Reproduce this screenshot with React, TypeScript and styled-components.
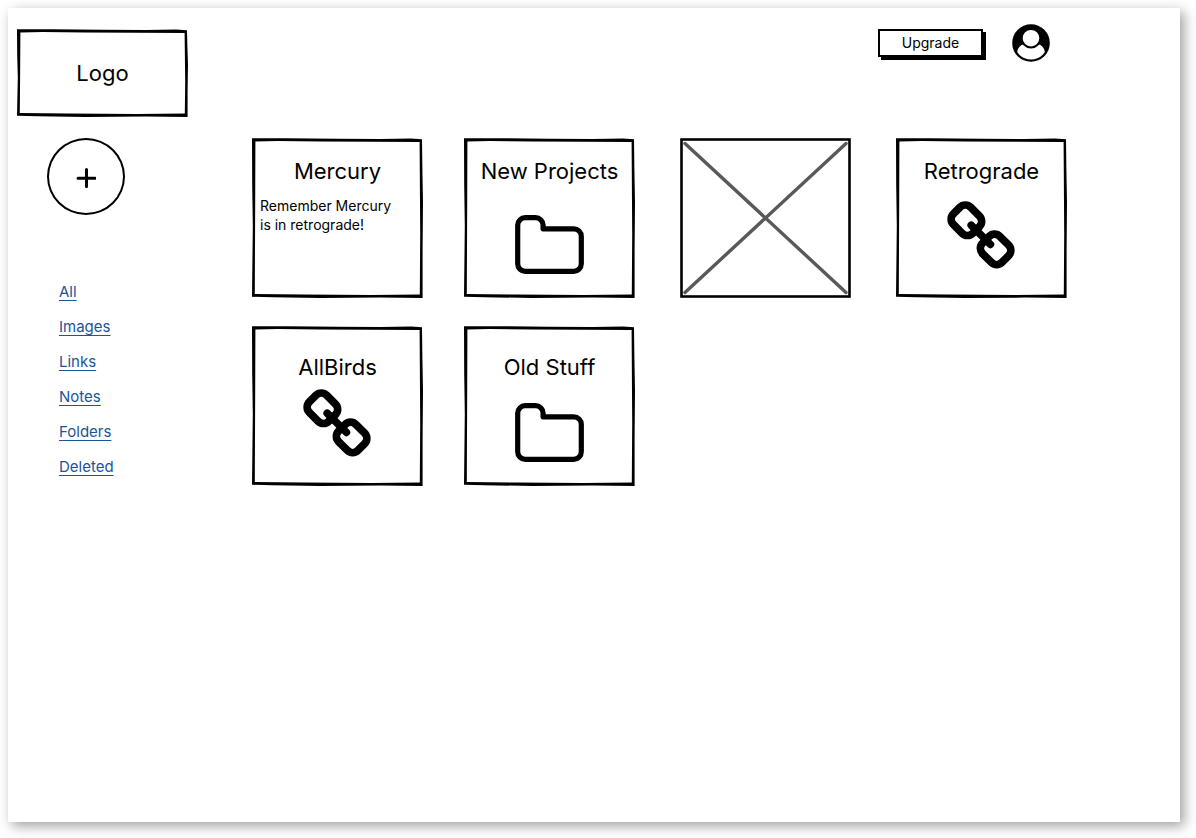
import React from "react";
import styled, { createGlobalStyle } from "styled-components";

const ink = "#000";

const GlobalStyle = createGlobalStyle`
  * { box-sizing: border-box; }
  body {
    margin: 0;
    background: #fff;
    color: ${ink};
    font-family: Inter, "Liberation Sans", sans-serif;
  }
`;

const Sheet = styled.div`
  margin: 8px 16px 16px 8px;
  min-height: calc(100vh - 24px);
  background: #fff;
  box-shadow: 4px 4px 12px rgba(0, 0, 0, 0.38);
`;

const Header = styled.header`
  display: flex;
  justify-content: space-between;
  align-items: flex-start;
  padding: 21px 130px 21px 9px;
`;

const LogoLink = styled.a`
  position: relative;
  display: flex;
  align-items: center;
  justify-content: center;
  width: 171px;
  height: 88px;
  color: ${ink};
  font-size: 22px;
  line-height: 28px;
  text-decoration: none;
`;

const Actions = styled.div`
  display: flex;
  align-items: center;
  gap: 29px;
  height: 28px;
`;

const UpgradeButton = styled.button`
  width: 105px;
  height: 28px;
  padding: 0;
  border: 2px solid ${ink};
  background: #fff;
  box-shadow: 3px 3px 0 ${ink};
  color: ${ink};
  font: 14px/20px Inter, "Liberation Sans", sans-serif;
`;

const AvatarButton = styled.button`
  display: block;
  width: 38px;
  height: 38px;
  padding: 0;
  border: 0;
  border-radius: 50%;
  background: none;

  svg { display: block; }
`;

const Body = styled.div`
  display: flex;
  align-items: flex-start;
`;

const Sidebar = styled.aside`
  flex: 0 0 244px;
  padding-left: 39px;
`;

const AddButton = styled.button`
  display: flex;
  align-items: center;
  justify-content: center;
  width: 78px;
  height: 77px;
  padding: 2px 0 0;
  border: 2px solid ${ink};
  border-radius: 50%;
  background: #fff;
  color: ${ink};
`;

const NavList = styled.ul`
  margin: 67px 0 0;
  padding: 0 0 0 12px;
  list-style: none;
`;

const NavItem = styled.li`
  height: 35px;
  font-size: 15px;
  line-height: 20px;
`;

const NavLink = styled.a`
  color: #1a5599;
  text-decoration: underline 1px;
  text-underline-offset: 3px;
  text-decoration-skip-ink: none;
`;

const Board = styled.main`
  flex: 1;
  display: grid;
  grid-template-columns: 212px 216px 216px 171px;
  row-gap: 28px;

  @media (max-width: 1080px) {
    grid-template-columns: repeat(auto-fill, 212px);
  }
`;

const CardBox = styled.article<{ $low?: boolean }>`
  position: relative;
  display: flex;
  flex-direction: column;
  align-items: center;
  width: 171px;
  height: 160px;
  padding: ${(p) => (p.$low ? 27 : 19)}px 8px 24px;
`;

const CardTitle = styled.h2`
  margin: 0;
  font-size: 22px;
  font-weight: 400;
  line-height: 28px;
  white-space: nowrap;
`;

const CardNote = styled.p`
  align-self: stretch;
  margin: 11px 0 0;
  padding-right: 12px;
  font-size: 14px;
  line-height: 19px;
`;

const CardIcon = styled.div`
  margin-top: auto;

  svg { display: block; }
`;

const Outline = styled.svg`
  position: absolute;
  inset: 0;
  width: 100%;
  height: 100%;
  pointer-events: none;
`;

/* Pen-drawn rectangle: slightly bowed edges of uneven thickness. */
function SketchOutline({ width: w, height: h }: { width: number; height: number }) {
  const outer = `M0 0.2 L${w * 0.2} 0.2 L${w * 0.5} 0.8 L${w * 0.75} 1 L${w * 0.93} 0.6 L${w - 1} 1.2 L${w - 0.6} ${h * 0.2} L${w} ${h * 0.4} L${w - 0.4} ${h * 0.7} L${w - 0.4} ${h} L${w * 0.75} ${h - 0.4} L${w * 0.4} ${h} L${w * 0.12} ${h - 0.8} L0 ${h - 1.2} L0.8 ${h * 0.55} L0.2 ${h * 0.3}Z`;
  const inner = `M3.4 3.6 L3.2 ${h * 0.4} L2.8 ${h - 4} L${w * 0.3} ${h - 3.4} L${w * 0.7} ${h - 3} L${w - 3.2} ${h - 3.4} L${w - 2.8} ${h * 0.6} L${w - 3.4} 4 L${w * 0.7} 3.8 L${w * 0.4} 3.5 L${w * 0.15} 3Z`;
  return (
    <Outline viewBox={`0 0 ${w} ${h}`} preserveAspectRatio="none" aria-hidden="true">
      <path d={`${outer} ${inner}`} fill={ink} fillRule="evenodd" />
    </Outline>
  );
}

function FolderIcon() {
  return (
    <svg width="69" height="59" viewBox="0 0 69 59" aria-hidden="true">
      <path
        d="M2.7 10a7.5 7.5 0 0 1 7.5-7.3H20.6a7.5 7.5 0 0 1 7.5 7.3v3.8H58.8a7.5 7.5 0 0 1 7.5 7.5V48.8a7.5 7.5 0 0 1-7.5 7.5H10.2A7.5 7.5 0 0 1 2.7 48.8Z"
        fill="none"
        stroke={ink}
        strokeWidth="5.2"
        strokeLinejoin="round"
      />
    </svg>
  );
}

function ChainIcon() {
  return (
    <svg width="69" height="73" viewBox="0 0 69 73" fill="none" stroke={ink} aria-hidden="true">
      <g strokeWidth="7.8">
        <rect x="-13.7" y="-12.2" width="27.4" height="24.4" rx="7.6" transform="translate(19.4 19.2) rotate(45)" />
        <rect x="-13.7" y="-12.2" width="27.4" height="24.4" rx="7.6" transform="translate(48.6 48.4) rotate(45)" />
      </g>
      <path d="M24.2 24.2 43.4 43.4" strokeWidth="7.6" strokeLinecap="round" />
    </svg>
  );
}

function PlusIcon() {
  return (
    <svg width="20" height="20" viewBox="0 0 20 20" aria-hidden="true">
      <path d="M10.5 1.6v17M2 10.2h17" stroke={ink} strokeWidth="3" strokeLinecap="round" />
    </svg>
  );
}

function UserIcon() {
  return (
    <svg width="38" height="38" viewBox="0 0 38 38" aria-hidden="true">
      <defs>
        <clipPath id="user-ring">
          <circle cx="19" cy="19" r="16.6" />
        </clipPath>
      </defs>
      <circle cx="19" cy="19" r="18.8" fill={ink} />
      <path
        clipPath="url(#user-ring)"
        d="M5 38V29C5.6 24 8 20.6 12.4 20.2H25.6C30 20.6 32.4 24 33 29V38Z"
        fill="#fff"
      />
      <circle cx="19" cy="14.2" r="9.3" fill="#fff" stroke={ink} strokeWidth="2" />
    </svg>
  );
}

function ImagePlaceholder() {
  return (
    <Outline viewBox="0 0 171 160" preserveAspectRatio="none" role="img" aria-label="Image">
      <path d="M5 5.5 166 154.5M166 5.5 5 154.5" stroke="#595959" strokeWidth="3.4" strokeLinecap="round" />
      <rect x="1.5" y="1.5" width="168" height="157" fill="none" stroke={ink} strokeWidth="2.6" />
    </Outline>
  );
}

type Card = { kind: "note" | "folder" | "link" | "image"; title?: string; note?: string; low?: boolean };

const cards: Card[] = [
  { kind: "note", title: "Mercury", note: "Remember Mercury is in retrograde!" },
  { kind: "folder", title: "New Projects" },
  { kind: "image" },
  { kind: "link", title: "Retrograde" },
  { kind: "link", title: "AllBirds", low: true },
  { kind: "folder", title: "Old Stuff", low: true },
];

const filters = ["All", "Images", "Links", "Notes", "Folders", "Deleted"];

function BoardCard({ kind, title, note, low }: Card) {
  return (
    <CardBox $low={low}>
      {kind === "image" ? <ImagePlaceholder /> : <SketchOutline width={171} height={160} />}
      {title && <CardTitle>{title}</CardTitle>}
      {note && <CardNote>{note}</CardNote>}
      {kind === "folder" && <CardIcon><FolderIcon /></CardIcon>}
      {kind === "link" && <CardIcon><ChainIcon /></CardIcon>}
    </CardBox>
  );
}

export default function App() {
  return (
    <>
      <GlobalStyle />
      <Sheet>
        <Header>
          <LogoLink href="#">
            <SketchOutline width={171} height={88} />
            Logo
          </LogoLink>
          <Actions>
            <UpgradeButton type="button">Upgrade</UpgradeButton>
            <AvatarButton type="button" aria-label="Account">
              <UserIcon />
            </AvatarButton>
          </Actions>
        </Header>
        <Body>
          <Sidebar>
            <AddButton type="button" aria-label="Add">
              <PlusIcon />
            </AddButton>
            <nav aria-label="Filters">
              <NavList>
                {filters.map((name) => (
                  <NavItem key={name}>
                    <NavLink href={`#${name.toLowerCase()}`}>{name}</NavLink>
                  </NavItem>
                ))}
              </NavList>
            </nav>
          </Sidebar>
          <Board>
            {cards.map((card, i) => (
              <BoardCard key={i} {...card} />
            ))}
          </Board>
        </Body>
      </Sheet>
    </>
  );
}
